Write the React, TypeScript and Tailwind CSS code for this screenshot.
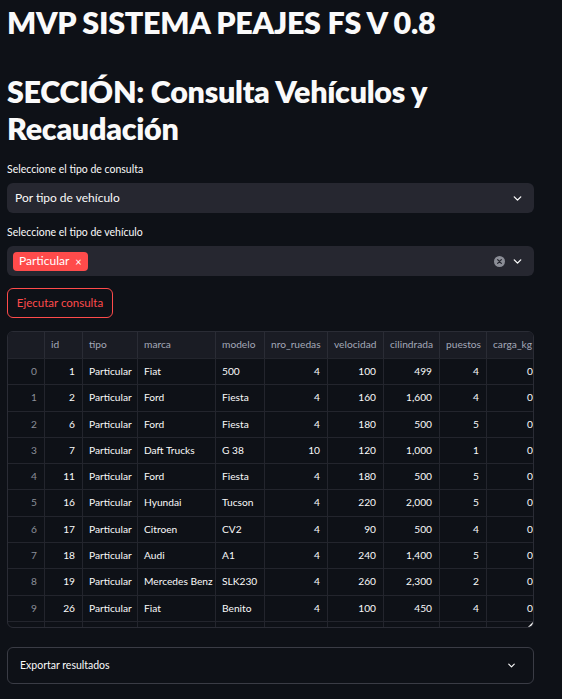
import { ChevronDown } from 'lucide-react';

const cols = [
  { key: 'idx', label: '', w: 37, align: 'right', dim: true },
  { key: 'id', label: 'id', w: 38, align: 'right' },
  { key: 'tipo', label: 'tipo', w: 55, align: 'left' },
  { key: 'marca', label: 'marca', w: 78, align: 'left' },
  { key: 'modelo', label: 'modelo', w: 49, align: 'left' },
  { key: 'ruedas', label: 'nro_ruedas', w: 63, align: 'right' },
  { key: 'vel', label: 'velocidad', w: 56, align: 'right' },
  { key: 'cil', label: 'cilindrada', w: 56, align: 'right' },
  { key: 'pue', label: 'puestos', w: 47, align: 'right' },
  { key: 'carga', label: 'carga_kg', w: 54, align: 'right' },
];

const rows = [
  ['0', '1', 'Particular', 'Fiat', '500', '4', '100', '499', '4', '0'],
  ['1', '2', 'Particular', 'Ford', 'Fiesta', '4', '160', '1,600', '4', '0'],
  ['2', '6', 'Particular', 'Ford', 'Fiesta', '4', '180', '500', '5', '0'],
  ['3', '7', 'Particular', 'Daft Trucks', 'G 38', '10', '120', '1,000', '1', '0'],
  ['4', '11', 'Particular', 'Ford', 'Fiesta', '4', '180', '500', '5', '0'],
  ['5', '16', 'Particular', 'Hyundai', 'Tucson', '4', '220', '2,000', '5', '0'],
  ['6', '17', 'Particular', 'Citroen', 'CV2', '4', '90', '500', '4', '0'],
  ['7', '18', 'Particular', 'Audi', 'A1', '4', '240', '1,400', '5', '0'],
  ['8', '19', 'Particular', 'Mercedes Benz', 'SLK230', '4', '260', '2,300', '2', '0'],
  ['9', '26', 'Particular', 'Fiat', 'Benito', '4', '100', '450', '4', '0'],
  ['', '', '', '', '', '', '', '', '', ''],
];

function Chevron() {
  return <ChevronDown size={13} strokeWidth={2.5} className="text-[#fafafa]" />;
}

export default function App() {
  return (
    <div className="min-h-[699px] bg-[#0e1117] text-[#fafafa] font-['Lato',sans-serif] pl-[7px] pr-[28px] pt-[4px] overflow-hidden">
      <h1 className="text-[30.5px] font-extrabold leading-[37px] tracking-[-0.3px]">MVP SISTEMA PEAJES FS V 0.8</h1>
      <h1 className="mt-[32px] text-[30.5px] font-extrabold leading-[37px] tracking-[-0.3px]">SECCIÓN: Consulta Vehículos y Recaudación</h1>

      <div className="mt-[15px] text-[10.5px] leading-[14px]">Seleccione el tipo de consulta</div>
      <div className="mt-[7px] h-[30px] rounded-[6px] bg-[#262730] flex items-center justify-between pl-[8px] pr-[10px]">
        <span className="text-[12px]">Por tipo de vehículo</span>
        <Chevron />
      </div>

      <div className="mt-[12px] text-[10.5px] leading-[14px]">Seleccione el tipo de vehículo</div>
      <div className="mt-[7px] h-[30px] rounded-[6px] bg-[#262730] flex items-center justify-between pl-[6px] pr-[10px]">
        <span className="h-[19px] rounded-[4px] bg-[#ff4b4b] flex items-center gap-[6px] px-[6px] text-[12px] text-white">
          Particular <span className="text-[11px] leading-none">×</span>
        </span>
        <div className="flex items-center gap-[6px]">
          <svg width="11" height="11" viewBox="0 0 12 12">
            <circle cx="6" cy="6" r="6" fill="#8b8d96" />
            <path d="M4 4 L8 8 M8 4 L4 8" stroke="#262730" strokeWidth="1.4" strokeLinecap="round" />
          </svg>
          <Chevron />
        </div>
      </div>

      <button className="mt-[12px] h-[30px] w-[106px] rounded-[6px] border border-[#ff4b4b] text-[#ff4b4b] text-[11.5px] flex items-center justify-center">
        Ejecutar consulta
      </button>

      <div className="relative mt-[13px] h-[297px] w-[527px] overflow-hidden rounded-[6px] border border-[#2a2c35]">
        <div className="flex h-[26px] bg-[#1a1c24] text-[#a3a8b8] text-[10.2px]">
          {cols.map((c) => (
            <div key={c.key} style={{ width: c.w }} className="shrink-0 border-r border-[#2a2c35] flex items-center px-[6px] whitespace-nowrap overflow-hidden">
              {c.label}
            </div>
          ))}
        </div>
        {rows.map((r, i) => (
          <div key={i} className="flex h-[26.3px] border-t border-[#23252d] text-[10.2px]">
            {cols.map((c, j) => (
              <div
                key={c.key}
                style={{ width: c.w }}
                className={`shrink-0 border-r border-[#23252d] flex items-center whitespace-nowrap overflow-hidden ${c.align === 'right' ? 'justify-end pr-[7px]' : 'justify-start pl-[6px]'} ${c.dim ? 'text-[#8c8f99]' : 'text-[#fafafa]'}`}
              >
                {r[j]}
              </div>
            ))}
          </div>
        ))}
        <svg className="absolute right-0 bottom-0" width="5" height="5" viewBox="0 0 5 5">
          <path d="M5 0 L5 5 L0 5 Z" fill="#fafafa" />
        </svg>
      </div>

      <div className="mt-[19px] h-[37px] rounded-[6px] border border-[#3a3c45] flex items-center justify-between pl-[12px] pr-[16px]">
        <span className="text-[10.5px]">Exportar resultados</span>
        <ChevronDown size={11} strokeWidth={2.5} className="text-[#fafafa]" />
      </div>
    </div>
  );
}
